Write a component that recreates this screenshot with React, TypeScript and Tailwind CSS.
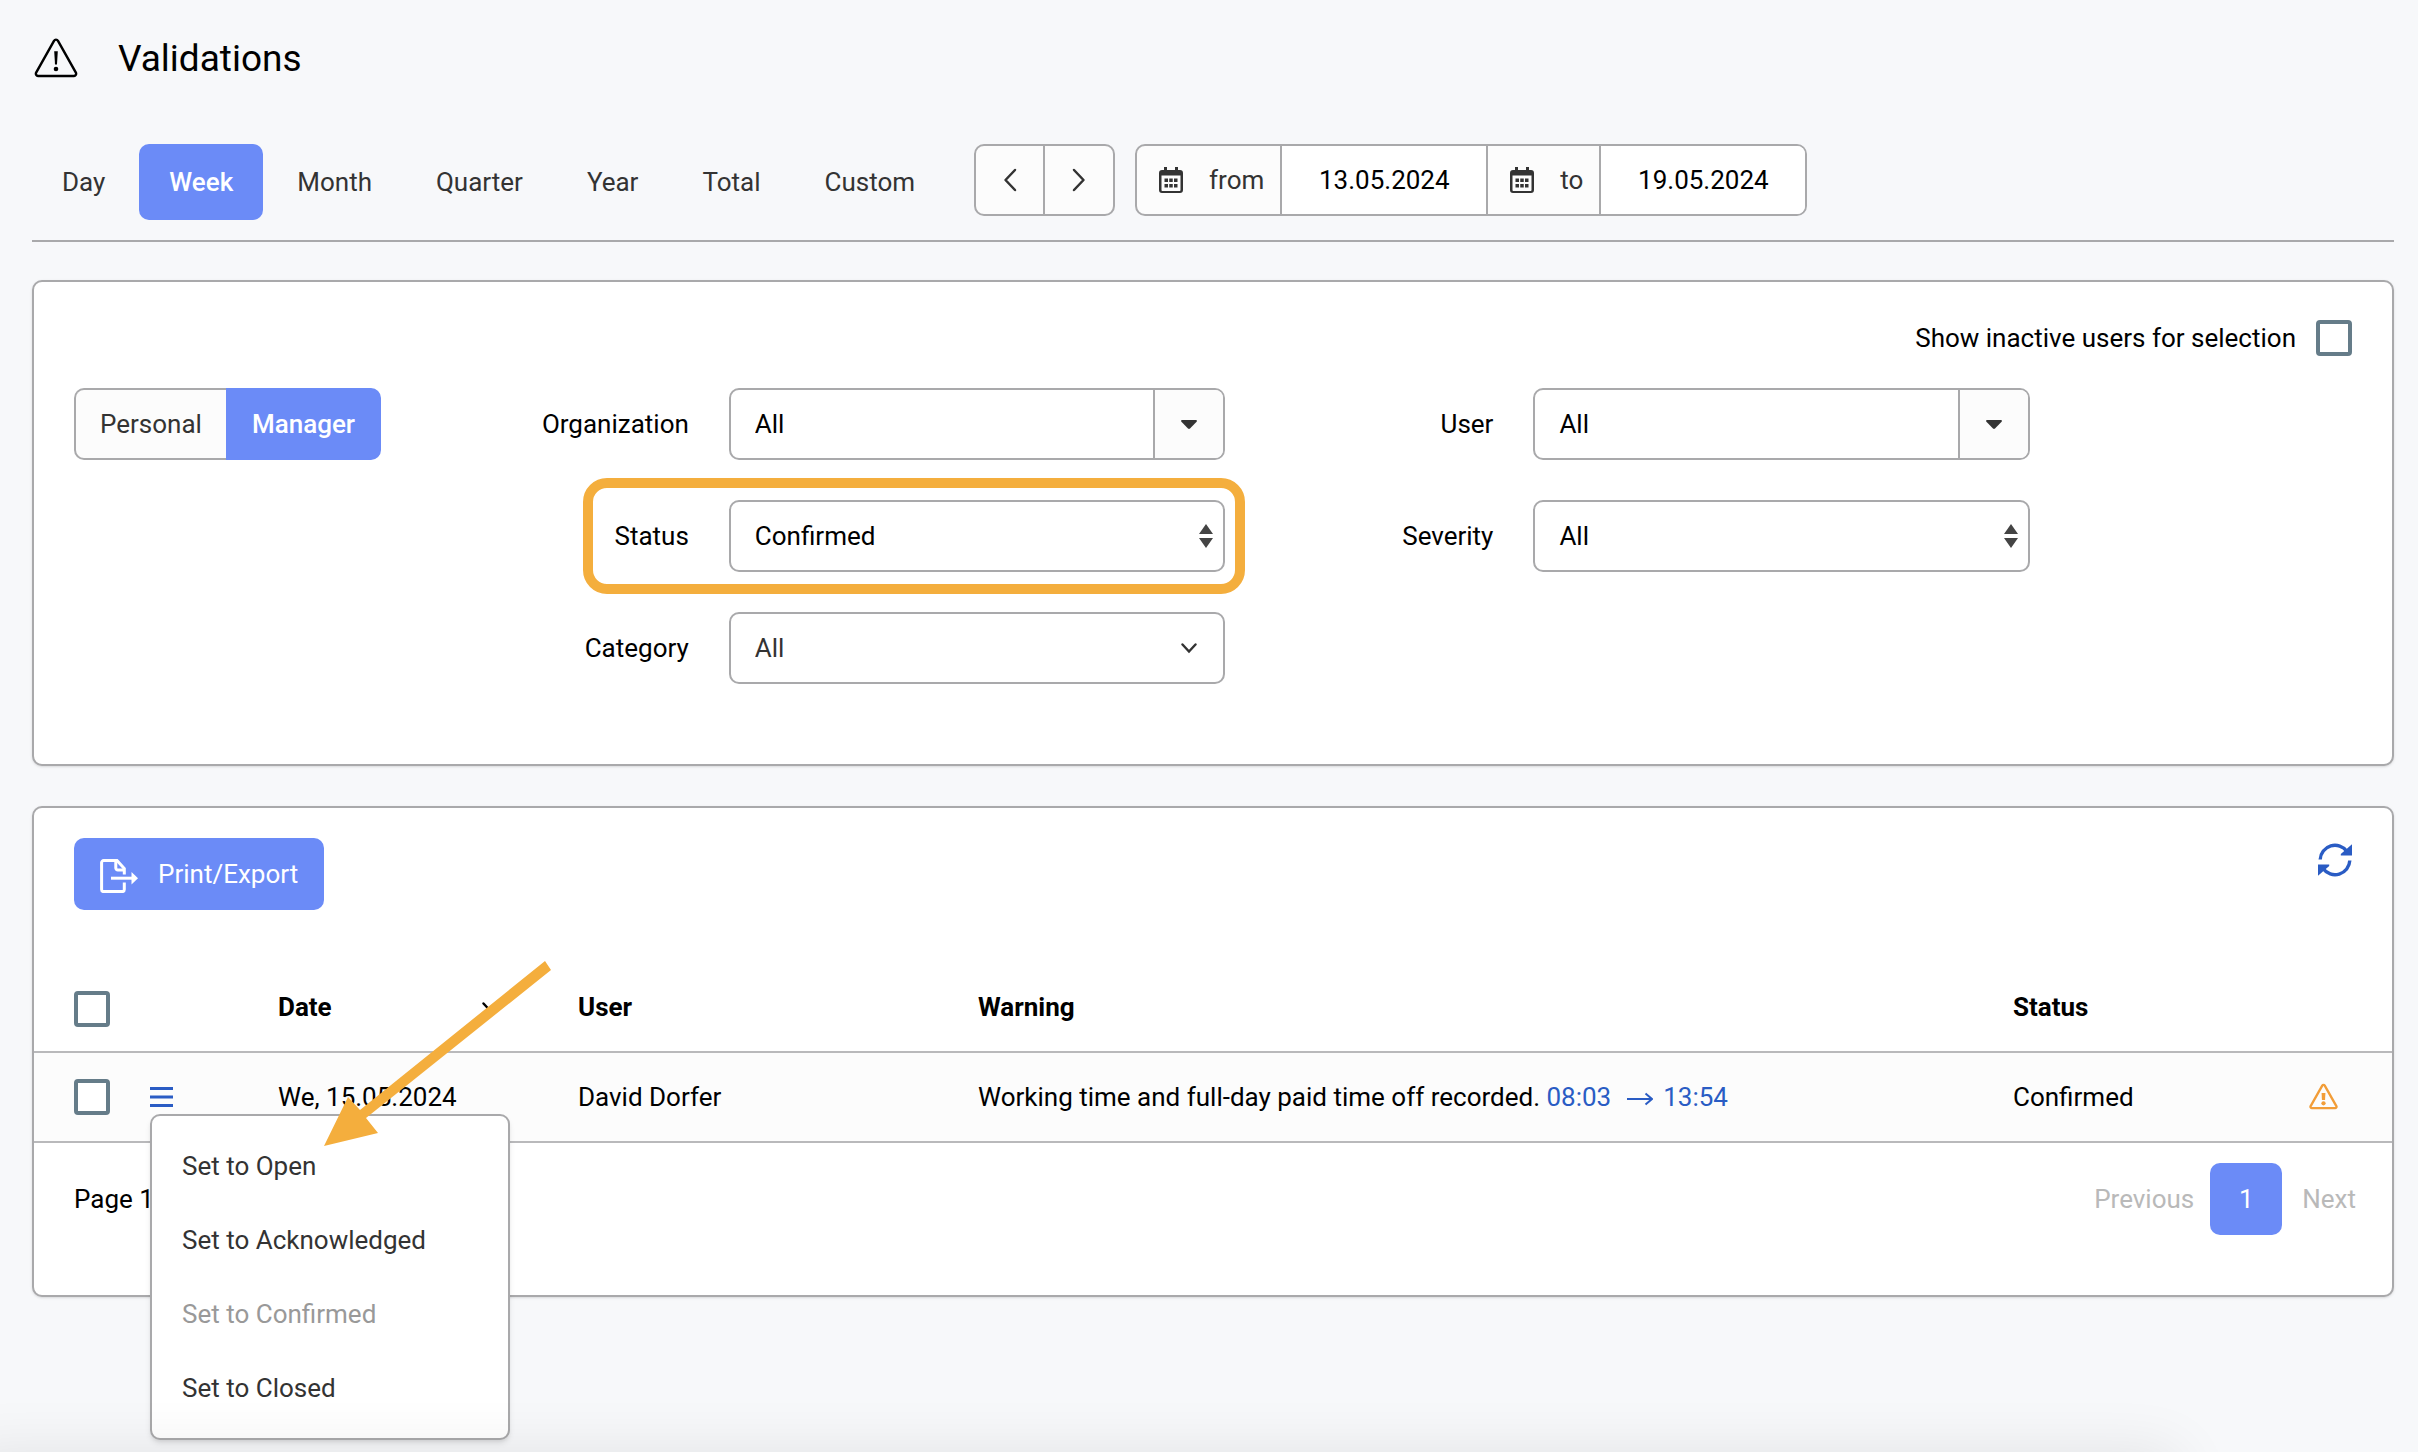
import { useState } from "react";

const tabs = ["Day", "Week", "Month", "Quarter", "Year", "Total", "Custom"];

const menuItems = [
  { label: "Set to Open", disabled: false },
  { label: "Set to Acknowledged", disabled: false },
  { label: "Set to Confirmed", disabled: true },
  { label: "Set to Closed", disabled: false },
];

const App: React.FC = () => {
  return (
    <div className="relative min-h-screen bg-[#f7f8fa] pt-8 pb-10 pl-8 pr-6 font-[Roboto,sans-serif] text-[26px] leading-8 text-black">
      <header className="flex items-center gap-10 pl-[2px]">
        <TriangleIcon />
        <h1 className="pt-[2px] text-[37px] leading-[50px]">Validations</h1>
      </header>
      <PeriodBar />
      <Filters />
      <Results />
      {/* soft shadow rising from the lower edge of the window */}
      <div className="pointer-events-none absolute inset-x-0 bottom-0 z-30 h-16 overflow-hidden">
        <div className="absolute top-full right-[240px] -left-10 h-20 shadow-[0_0_60px_rgba(0,0,0,0.09)]" />
      </div>
    </div>
  );
};

const PeriodBar: React.FC = () => {
  const [active, setActive] = useState("Week");

  return (
    <div className="mt-[60px] flex items-start border-b-2 border-[#a9a9ab] pb-5">
      <nav className="mr-[29px] flex gap-1">
        {tabs.map((tab) => (
          <button
            key={tab}
            type="button"
            onClick={() => setActive(tab)}
            className={
              tab === active
                ? "h-[76px] rounded-[10px] bg-[#6b8bf7] px-[30px] font-medium text-white"
                : "h-[76px] rounded-[10px] px-[30px] text-[#333]"
            }
          >
            {tab}
          </button>
        ))}
      </nav>
      <div className="mr-5 flex h-[72px] overflow-hidden rounded-[10px] border-2 border-[#a9a9ab] bg-[#fcfcfc] text-[#333]">
        <button
          type="button"
          aria-label="Previous period"
          className="flex w-[69px] items-center justify-center border-r-2 border-[#a9a9ab]"
        >
          <svg width="14" height="24" viewBox="0 0 14 24" fill="none">
            <path d="M12 2 2.500 12 12 22" stroke="currentColor" strokeWidth="2.500" strokeLinecap="round" strokeLinejoin="round" />
          </svg>
        </button>
        <button
          type="button"
          aria-label="Next period"
          className="flex w-[68px] items-center justify-center"
        >
          <svg width="14" height="24" viewBox="0 0 14 24" fill="none">
            <path d="M2 2l9.500 10L2 22" stroke="currentColor" strokeWidth="2.500" strokeLinecap="round" strokeLinejoin="round" />
          </svg>
        </button>
      </div>
      <div className="flex h-[72px] overflow-hidden rounded-[10px] border-2 border-[#a9a9ab] bg-[#fcfcfc]">
        <DateField id="from" value="13.05.2024" />
        <DateField id="to" value="19.05.2024" last />
      </div>
    </div>
  );
};

const DateField: React.FC<{ id: string; value: string; last?: boolean }> = ({
  id,
  value,
  last,
}) => (
  <>
    <label
      htmlFor={id}
      className="flex items-center gap-[26px] border-r-2 border-[#a9a9ab] pl-[22px] pr-4 text-[#333]"
    >
      <CalendarIcon />
      {id}
    </label>
    <input
      id={id}
      type="text"
      defaultValue={value}
      className={
        last
          ? "w-[204px] bg-white text-center"
          : "w-[206px] border-r-2 border-[#a9a9ab] bg-white text-center"
      }
    />
  </>
);

const Filters: React.FC = () => {
  const [view, setView] = useState("Manager");

  return (
    <section className="mt-[38px] rounded-[10px] border-2 border-[#a9a9ab] bg-white px-10 pt-[38px] pb-20 shadow-sm">
      <div className="flex items-center justify-end gap-5">
        <label htmlFor="inactive">Show inactive users for selection</label>
        <Checkbox id="inactive" />
      </div>
      <div className="mt-8 grid grid-cols-[306fr_348fr_496fr_309fr_497fr_322fr] gap-y-10">
        <div className="row-span-3 flex items-start">
          {["Personal", "Manager"].map((name) => (
            <button
              key={name}
              type="button"
              onClick={() => setView(name)}
              className={
                name === view
                  ? "h-[72px] border-2 border-[#6b8bf7] bg-[#6b8bf7] px-6 font-medium text-white first:rounded-l-[10px] last:rounded-r-[10px]"
                  : "h-[72px] border-2 border-[#a9a9ab] bg-[#fcfcfc] px-6 text-[#333] first:rounded-l-[10px] first:border-r-0 last:rounded-r-[10px] last:border-l-0"
              }
            >
              {name}
            </button>
          ))}
        </div>
        <FieldLabel id="organization" text="Organization" />
        <ComboBox id="organization" />
        <FieldLabel id="user" text="User" />
        <ComboBox id="user" />

        <FieldLabel id="status" text="Status" start />
        <div className="relative">
          <Select id="status" options={["Confirmed", "Open", "Acknowledged", "Closed", "All"]} />
          <div className="pointer-events-none absolute -top-[22px] -right-5 -bottom-[22px] -left-[146px] rounded-3xl border-10 border-[#f4ae3d]" />
        </div>
        <FieldLabel id="severity" text="Severity" />
        <div className="relative">
          <Select id="severity" options={["All"]} />
        </div>

        <FieldLabel id="category" text="Category" start />
        <div className="relative">
          <select
            id="category"
            className="h-[72px] w-full appearance-none rounded-[10px] border-2 border-[#a9a9ab] bg-white px-6 text-[#333]"
          >
            <option>All</option>
          </select>
          <svg className="pointer-events-none absolute top-[31px] right-7 text-[#333]" width="16" height="11" viewBox="0 0 16 11" fill="none">
            <path d="M1.500 1.500 8 8.500l6.500-7" stroke="currentColor" strokeWidth="2.400" strokeLinecap="round" />
          </svg>
        </div>
      </div>
    </section>
  );
};

const FieldLabel: React.FC<{ id: string; text: string; start?: boolean }> = ({
  id,
  text,
  start,
}) => (
  <label
    htmlFor={id}
    className={
      start
        ? "col-start-2 self-center pr-10 text-right"
        : "self-center pr-10 text-right"
    }
  >
    {text}
  </label>
);

const ComboBox: React.FC<{ id: string }> = ({ id }) => (
  <div className="flex h-[72px] overflow-hidden rounded-[10px] border-2 border-[#a9a9ab] bg-white">
    <input id={id} type="text" defaultValue="All" className="min-w-0 flex-1 px-6" />
    <button
      type="button"
      aria-label="Show options"
      className="flex w-[70px] items-center justify-center border-l-2 border-[#a9a9ab] bg-[#fcfcfc] text-[#333]"
    >
      <svg width="16" height="9" viewBox="0 0 16 9" fill="currentColor">
        <path d="M1.200 0h13.600c1 0 1.400 1 .8 1.700L9 8.500c-.6.600-1.400.6-2 0L.4 1.700C-.2 1 .2 0 1.200 0z" />
      </svg>
    </button>
  </div>
);

const Select: React.FC<{ id: string; options: string[] }> = ({ id, options }) => (
  <>
    <select
      id={id}
      className="h-[72px] w-full appearance-none rounded-[10px] border-2 border-[#a9a9ab] bg-white px-6"
    >
      {options.map((option) => (
        <option key={option}>{option}</option>
      ))}
    </select>
    <svg className="pointer-events-none absolute top-6 right-3 text-[#444]" width="14" height="24" viewBox="0 0 14 24" fill="currentColor">
      <path d="M7 0l7 10H0zM7 24 0 14h14z" />
    </svg>
  </>
);

const Checkbox: React.FC<{ id: string; label?: string }> = ({ id, label }) => (
  <input
    id={id}
    type="checkbox"
    aria-label={label}
    className="size-9 appearance-none rounded-sm border-4 border-[#657c89] bg-white checked:bg-[#6b8bf7]"
  />
);

const Results: React.FC = () => {
  return (
    <section className="relative mt-10 rounded-[10px] border-2 border-[#a9a9ab] bg-white shadow-sm">
      <div className="flex items-start justify-between px-10 pt-[30px]">
        <button
          type="button"
          className="flex h-[72px] items-center gap-5 rounded-[10px] bg-[#6b8bf7] px-[26px] text-white"
        >
          <ExportIcon />
          Print/Export
        </button>
        <button type="button" aria-label="Refresh" className="mt-[5px] text-[#2a5cc4]">
          <RefreshIcon />
        </button>
      </div>
      <table className="mt-[57px] w-full table-fixed border-separate border-spacing-0 text-left">
        <thead>
          <tr className="h-[86px] *:border-b-2 *:border-[#b9b9bb] *:px-0 *:pt-0 *:pb-1 *:font-bold">
            <th className="w-[244px]">
              <div className="flex pt-1 pl-10">
                <Checkbox id="select-all" label="Select all" />
              </div>
            </th>
            <th className="w-[300px]">
              <div className="flex items-center justify-between pr-20">
                Date
                <svg width="16" height="11" viewBox="0 0 16 11" fill="none">
                  <path d="M1.500 1.500 8 8.500l6.500-7" stroke="currentColor" strokeWidth="2.400" strokeLinecap="round" />
                </svg>
              </div>
            </th>
            <th className="w-[400px]">User</th>
            <th>Warning</th>
            <th className="w-[280px]">Status</th>
            <th className="w-[99px]" aria-label="Severity" />
          </tr>
        </thead>
        <tbody>
          <tr className="h-[90px] bg-[#fcfcfc] *:border-b-2 *:border-[#b9b9bb] *:p-0">
            <td>
              <div className="relative flex items-center gap-10 pl-10">
                <Checkbox id="row-1" label="Select row" />
                <button type="button" aria-label="Row actions" className="text-[#2a5cc4]">
                  <svg width="23" height="20" viewBox="0 0 23 20" fill="currentColor">
                    <path d="M0 0h23v3H0zM0 8.500h23v3H0zM0 17h23v3H0z" />
                  </svg>
                </button>
                <ActionMenu />
              </div>
            </td>
            <td>We, 15.05.2024</td>
            <td>David Dorfer</td>
            <td>
              Working time and full-day paid time off recorded.{" "}
              <a href="#entry" className="text-[#2a5cc4]">
                08:03
                <svg className="mr-[10px] ml-4 inline" width="26" height="16" viewBox="0 0 26 16" fill="none">
                  <path d="M0 8h25M18.500 2.500 25 8l-6.500 5.500" stroke="currentColor" strokeWidth="2" />
                </svg>
                13:54
              </a>
            </td>
            <td>Confirmed</td>
            <td>
              <WarningIcon />
            </td>
          </tr>
        </tbody>
      </table>
      <div className="flex items-center justify-between pt-5 pr-9 pb-[60px] pl-10">
        <span>Page 1 of 1</span>
        <div className="flex items-center gap-4 text-[#b9b9b9]">
          <button type="button" disabled>
            Previous
          </button>
          <button type="button" className="size-[72px] rounded-[10px] bg-[#6b8bf7] text-white">
            1
          </button>
          <button type="button" disabled className="pl-1">
            Next
          </button>
        </div>
      </div>
      <Arrow />
    </section>
  );
};

const ActionMenu: React.FC = () => (
  <ul className="absolute top-[35px] left-[116px] z-10 w-[360px] rounded-[10px] border-2 border-[#a9a9ab] bg-white py-[13px] shadow-md">
    {menuItems.map((item) => (
      <li key={item.label}>
        <button
          type="button"
          disabled={item.disabled}
          className="h-[74px] w-full px-[30px] text-left text-[#333] disabled:text-[#999]"
        >
          {item.label}
        </button>
      </li>
    ))}
  </ul>
);

// orange pointer lying over the table, its tip at "Set to Open"
const Arrow: React.FC = () => (
  <svg
    className="pointer-events-none absolute top-[153px] left-[290px] z-20"
    width="228"
    height="186"
    viewBox="0 0 228 186"
    fill="#f4ae3d"
  >
    <path d="M221 0l6 9L42 157l12 15L0 185l24-49 12 13z" />
  </svg>
);

const TriangleIcon: React.FC = () => (
  <svg width="44" height="40" viewBox="0 0 44 40" fill="none" stroke="currentColor">
    <path d="M20 2.800a2.300 2.300 0 0 1 4 0l18 32a2.300 2.300 0 0 1-2 3.200H4a2.300 2.300 0 0 1-2-3.200z" strokeWidth="2.400" />
    <path d="M20.200 13.200h3.600l-.8 13.300h-2z" fill="currentColor" stroke="none" />
    <circle cx="22" cy="31" r="2.300" fill="currentColor" stroke="none" />
  </svg>
);

const WarningIcon: React.FC = () => (
  <svg className="mb-[2px] ml-4" width="29" height="27" viewBox="0 0 30 27" fill="none">
    <path d="M13.700 2.200a1.500 1.500 0 0 1 2.600 0l12 21.200a1.500 1.500 0 0 1-1.300 2.200H3a1.500 1.500 0 0 1-1.300-2.200z" stroke="#f29d38" strokeWidth="2.400" />
    <path d="M13 10h4l-.4 7.200h-3.200z" fill="#f29d38" />
    <circle cx="15" cy="20.500" r="2.200" fill="#f29d38" />
  </svg>
);

const CalendarIcon: React.FC = () => (
  <svg width="24" height="26" viewBox="0 0 24 26" fill="currentColor">
    <path
      fillRule="evenodd"
      d="M5 0h3v3h8V0h3v3h2a3 3 0 0 1 3 3v17a3 3 0 0 1-3 3H3a3 3 0 0 1-3-3V6a3 3 0 0 1 3-3h2zM2.500 8.500V23c0 .6.400 1 1 1h17c.6 0 1-.4 1-1V8.500z"
    />
    <path d="M5.500 11.500h3.500v3.500H5.500zM10.250 11.500h3.500v3.500h-3.500zM15 11.500h3.500v3.500H15zM5.500 17h3.500v3.500H5.500zM10.250 17h3.500v3.500h-3.500zM15 17h3.500v3.500H15z" />
  </svg>
);

const ExportIcon: React.FC = () => (
  <svg className="mt-1" width="38" height="34" viewBox="0 0 38 34" fill="none" stroke="currentColor" strokeWidth="3">
    <path d="M24.300 15.500V9.500L17 1.600H3.600a2 2 0 0 0-2 2v27a2 2 0 0 0 2 2h18.700a2 2 0 0 0 2-2V23.500" />
    <path d="M15.800 1.500V9a2 2 0 0 0 2 2h7" />
    <path d="M11 19.200H33" />
    <path d="M31.500 13l6.500 6.200-6.500 6.200z" fill="currentColor" stroke="none" />
  </svg>
);

const RefreshIcon: React.FC = () => (
  <svg width="34" height="34" viewBox="0 0 34 34" fill="none">
    <path d="M2.200 16.500A14.800 14.800 0 0 1 29 8.500M31.800 17.500A14.800 14.800 0 0 1 5 25.500" stroke="currentColor" strokeWidth="3.400" />
    <path d="M34 1.300V12.500H22.800l0-1.500zM0 32.700V21.500h11.200l0 1.500z" fill="currentColor" />
  </svg>
);

export default App;
